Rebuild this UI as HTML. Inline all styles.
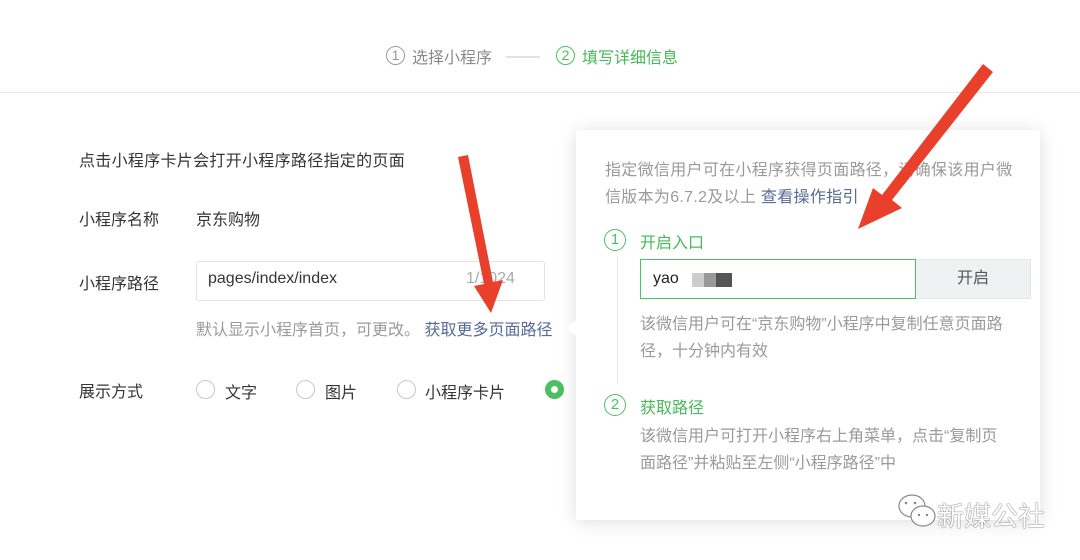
<!DOCTYPE html>
<html><head><meta charset="utf-8"><style>
*{margin:0;padding:0;box-sizing:border-box}
body{width:1080px;height:560px;background:#fff;position:relative;overflow:hidden;font-family:"Liberation Sans","Noto Sans CJK SC",sans-serif;color:#353535}
.a{position:absolute;white-space:nowrap}
.g{color:#9a9a9a}
.gr{color:#46b958}
.lk{color:#576b95}
.circ{position:absolute;border-radius:50%;border:1.5px solid}
.rad{position:absolute;width:19px;height:19px;border-radius:50%;border:1px solid #c8c8cc;top:380px}
</style></head><body>
<div class="circ" style="left:386px;top:46px;width:19px;height:19px;border-color:#999;color:#999;font-size:14px;line-height:16px;text-align:center">1</div>
<div class="a" style="left:412px;top:44px;font-size:16px;color:#8a8a8a">选择小程序</div>
<div class="a" style="left:506px;top:56px;width:34px;height:2px;background:#e0e2e6"></div>
<div class="circ" style="left:556px;top:46px;width:19px;height:19px;border-color:#4cbf62;color:#4cbf62;font-size:14px;line-height:16px;text-align:center">2</div>
<div class="a gr" style="left:582px;top:44px;font-size:16px">填写详细信息</div>
<div class="a" style="left:0;top:92px;width:1080px;height:1px;background:#e6e6e6"></div>

<div class="a" style="left:79px;top:147px;font-size:16px;letter-spacing:.3px">点击小程序卡片会打开小程序路径指定的页面</div>
<div class="a" style="left:79px;top:206px;font-size:16px">小程序名称</div>
<div class="a" style="left:196px;top:206px;font-size:16px">京东购物</div>
<div class="a" style="left:79px;top:270px;font-size:16px">小程序路径</div>
<div class="a" style="left:196px;top:261px;width:349px;height:40px;border:1px solid #e4e4e4;border-radius:3px"></div>
<div class="a" style="left:208px;top:270px;font-size:16px">pages/index/index</div>
<div class="a g" style="left:466px;top:270px;font-size:16px;color:#aaa">1/1024</div>
<div class="a g" style="left:196px;top:316px;font-size:16px">默认显示小程序首页，可更改。 <span class="lk">获取更多页面路径</span></div>
<div class="a" style="left:79px;top:378px;font-size:16px">展示方式</div>
<div class="rad" style="left:196px"></div><div class="a" style="left:225px;top:379px;font-size:16px">文字</div>
<div class="rad" style="left:296px"></div><div class="a" style="left:325px;top:379px;font-size:16px">图片</div>
<div class="rad" style="left:397px"></div><div class="a" style="left:425px;top:379px;font-size:16px">小程序卡片</div>
<div class="rad" style="left:545px;border:6px solid #4cbf62;background:#fff"></div>

<div class="a" style="left:576px;top:130px;width:464px;height:390px;background:#fff;box-shadow:0 2px 18px rgba(0,0,0,.13)"></div>
<div class="a" style="left:567px;top:320px;width:0;height:0;border-top:8px solid transparent;border-bottom:8px solid transparent;border-right:9px solid #fff"></div>
<div class="a g" style="left:605px;top:157px;font-size:16px;line-height:27px;letter-spacing:.3px">指定微信用户可在小程序获得页面路径，请确保该用户微<br>信版本为6.7.2及以上 <span class="lk">查看操作指引</span></div>
<div class="circ" style="left:604px;top:229px;width:22px;height:22px;border-color:#4cbf62;color:#4cbf62;font-size:15px;line-height:19px;text-align:center">1</div>
<div class="a gr" style="left:640px;top:229px;font-size:16px">开启入口</div>
<div class="a" style="left:617px;top:256px;width:1px;height:128px;background:#e6e6e6"></div>
<div class="a" style="left:640px;top:259px;width:276px;height:40px;border:1px solid #4cbf62"></div>
<div class="a" style="left:653px;top:270px;font-size:16px;color:#222">yao</div>
<div class="a" style="left:692px;top:273px;width:12px;height:14px;background:#ccc"></div>
<div class="a" style="left:704px;top:273px;width:12px;height:14px;background:#999"></div>
<div class="a" style="left:716px;top:273px;width:16px;height:14px;background:#555"></div>
<div class="a" style="left:916px;top:259px;width:115px;height:40px;background:#f0f1f3;border:1px solid #e6e7ea;border-left:none;text-align:center;line-height:38px;font-size:16px;color:#555">开启</div>
<div class="a g" style="left:640px;top:311px;font-size:16px;line-height:27px">该微信用户可在“京东购物”小程序中复制任意页面路<br>径，十分钟内有效</div>
<div class="circ" style="left:604px;top:394px;width:22px;height:22px;border-color:#4cbf62;color:#4cbf62;font-size:15px;line-height:19px;text-align:center">2</div>
<div class="a gr" style="left:640px;top:394px;font-size:16px">获取路径</div>
<div class="a g" style="left:640px;top:423px;font-size:16px;line-height:27px">该微信用户可打开小程序右上角菜单，点击“复制页<br>面路径”并粘贴至左侧“小程序路径”中</div>

<svg class="a" style="left:895px;top:490px" width="48" height="42"><g fill="#fff" stroke="#888" stroke-width="1.2"><ellipse cx="17" cy="16" rx="13" ry="11"/><ellipse cx="28" cy="26" rx="12" ry="10"/></g><g fill="#888"><circle cx="11" cy="13" r="1.3"/><circle cx="20" cy="13" r="1.3"/><circle cx="24" cy="25" r="1.2"/><circle cx="32" cy="25" r="1.2"/></g></svg>
<div class="a" style="left:937px;top:495px;font-size:27px;color:#fff;text-shadow:0 0 1px #555,0 0 1px #555">新媒公社</div>

<svg class="a" style="left:0;top:0" width="1080" height="560">
<g fill="#e8402a">
<polygon points="458,157 468,155 493,282 503,280 491,313 474,286 484,284"/>
<polygon points="983,64 993,72 892,200 902,208 858,229 873,188 882,195"/>
</g></svg>
</body></html>
